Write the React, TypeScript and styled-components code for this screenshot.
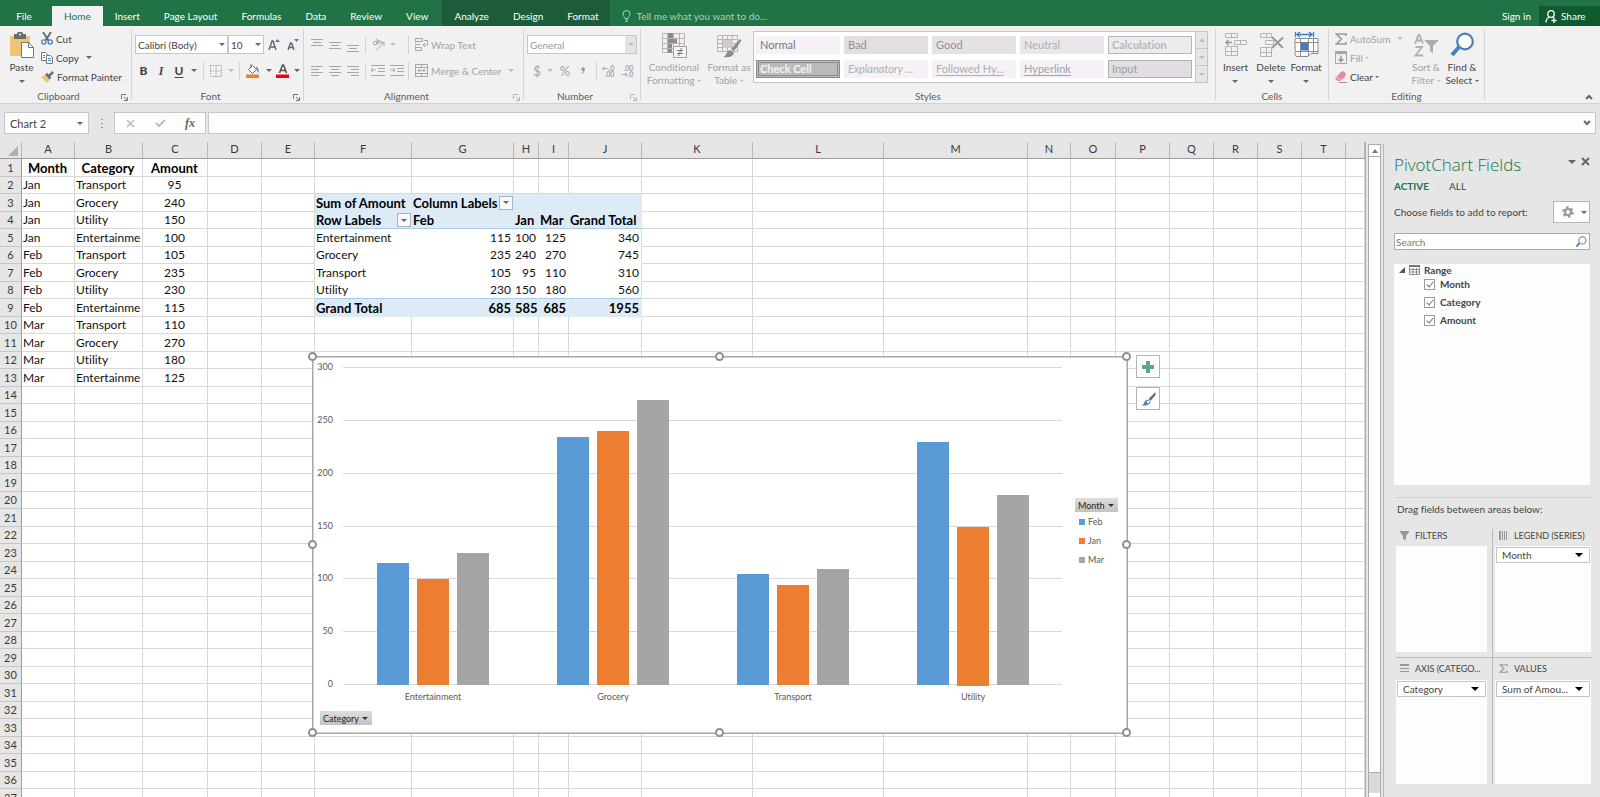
import React from 'react';
import styled, { createGlobalStyle, css } from 'styled-components';

const GlobalStyle = createGlobalStyle`
  *, *::before, *::after { box-sizing: border-box; }
  html, body { margin: 0; height: 100%; }
  body { font-family: Lato, 'Open Sans', sans-serif; font-size: 10px; font-variant-ligatures: none; color: #444; background: #e6e6e6; }
  button, select, input { font: inherit; font-variant-ligatures: none; color: inherit; margin: 0; padding: 0; border: 0; background: none; border-radius: 0; }
  svg { display: block; flex: none; }
`;

/* ---------- shell ---------- */

const Window = styled.div`
  display: flex;
  flex-direction: column;
  height: 100vh;
  overflow: hidden;
`;

const TabBar = styled.nav`
  display: flex;
  align-items: flex-end;
  height: 26px;
  flex: none;
  background: #217346;
  color: #fff;
`;

const Tab = styled.button<{ $active?: boolean }>`
  height: 20px;
  padding: 0 12px;
  white-space: nowrap;
  ${(p) => p.$active && css`background: #f1f1f1; color: #217346;`}
`;

const FileTab = styled(Tab)`
  width: 52px;
  padding: 0 4px 0 0;
  text-align: center;
`;

const ContextTabs = styled.div`
  display: flex;
  align-items: flex-end;
  align-self: stretch;
  margin-left: 2px;
  background: #1c5c39;
`;

const TellMe = styled.label`
  display: flex;
  align-items: center;
  gap: 5px;
  height: 20px;
  margin-left: 12px;
  flex: 1;
  input { width: 200px; outline: 0; }
  input::placeholder { color: #a9d0b9; opacity: 1; }
`;

const SignIn = styled.a`
  line-height: 20px;
  margin-right: 8px;
  color: #fff;
  text-decoration: none;
`;

const Share = styled.button`
  display: flex;
  align-items: center;
  gap: 4px;
  height: 20px;
  width: 61px;
  padding-left: 6px;
  background: #0f5a2e;
`;

/* ---------- ribbon ---------- */

const Ribbon = styled.div`
  display: flex;
  height: 78px;
  flex: none;
  background: #f1f1f1;
  border-bottom: 1px solid #d2d2d2;
`;

const Group = styled.section<{ $width: number }>`
  display: flex;
  flex-direction: column;
  width: ${(p) => p.$width}px;
  margin: 3px 0;
  border-right: 1px solid #d4d4d4;
`;

const GroupBody = styled.div`
  display: flex;
  align-items: flex-start;
  flex: 1;
`;

const GroupFooter = styled.div`
  display: flex;
  align-items: center;
  height: 14px;
  margin-bottom: -3px;
  color: #5c5c5c;
`;

const GroupName = styled.span`
  flex: 1;
  text-align: center;
`;

const Launcher = styled.button<{ $dim?: boolean }>`
  width: 14px;
  height: 12px;
  padding: 3px 0 0 4px;
  color: ${(p) => (p.$dim ? '#b5b5b5' : '#777')};
`;

const Caret = styled.i<{ $color?: string; $size?: number }>`
  display: inline-block;
  flex: none;
  width: 0;
  height: 0;
  vertical-align: middle;
  border: ${(p) => p.$size ?? 3}px solid transparent;
  border-top-color: ${(p) => p.$color ?? '#666'};
  border-bottom-width: 0;
`;

const BigButton = styled.button<{ $width: number; $dim?: boolean }>`
  display: flex;
  flex-direction: column;
  align-items: center;
  gap: 3px;
  width: ${(p) => p.$width}px;
  padding-top: 3px;
  line-height: 13px;
  white-space: nowrap;
  color: ${(p) => (p.$dim ? '#a3a3a3' : '#444')};
  span { display: block; }
`;

const SmallRows = styled.div`
  display: flex;
  flex-direction: column;
`;

const SmallButton = styled.button<{ $dim?: boolean; $spread?: number }>`
  display: flex;
  align-items: center;
  gap: 3px;
  height: 19px;
  white-space: nowrap;
  color: ${(p) => (p.$dim ? '#a3a3a3' : '#444')};
  ${Caret} { margin-left: ${(p) => p.$spread ?? -1}px; }
`;

const ToolStack = styled.div<{ $pad?: number }>`
  display: flex;
  flex-direction: column;
  gap: 7px;
  padding: 6px 0 0 ${(p) => p.$pad ?? 0}px;
`;

const ToolRow = styled.div<{ $gap?: number }>`
  display: flex;
  align-items: center;
  gap: ${(p) => p.$gap ?? 0}px;
  height: 19px;
`;

const Tool = styled.button<{ $width?: number; $dim?: boolean }>`
  display: grid;
  place-items: center;
  width: ${(p) => p.$width ?? 18}px;
  height: 19px;
  color: ${(p) => (p.$dim ? '#a3a3a3' : '#444')};
`;

const Spacer = styled.span<{ $width: number }>`
  width: ${(p) => p.$width}px;
`;

const Glyph = styled.span<{ $kind?: 'bold' | 'italic' | 'underline' | 'number' | 'fx' }>`
  font-size: 12px;
  line-height: 14px;
  font-weight: ${(p) => (p.$kind === 'bold' ? 900 : p.$kind === 'number' ? 400 : 700)};
  ${(p) => p.$kind === 'italic' && css`font-family: 'Liberation Serif', serif; font-style: italic;`}
  ${(p) => p.$kind === 'fx' && css`font-family: 'Liberation Serif', serif; font-style: italic; color: #666;`}
  ${(p) => p.$kind === 'underline' && css`text-decoration: underline; text-underline-offset: 2px;`}
  ${(p) => p.$kind === 'number' && css`font-size: 13px;`}
`;

const Divider = styled.span<{ $height?: number }>`
  width: 1px;
  height: ${(p) => p.$height ?? 18}px;
  background: #d4d4d4;
`;

const Combo = styled.div<{ $width: number; $dim?: boolean }>`
  display: flex;
  align-items: center;
  width: ${(p) => p.$width}px;
  height: 19px;
  background: #fff;
  border: 1px solid #c6c6c6;
  color: ${(p) => (p.$dim ? '#9a9a9a' : '#444')};
  select { appearance: none; flex: 1; min-width: 0; padding-left: 2px; outline: 0; }
`;

const ComboArrow = styled.span<{ $shade?: boolean }>`
  display: grid;
  place-items: center;
  align-self: stretch;
  width: 11px;
  background: ${(p) => (p.$shade ? '#e3e3e3' : 'transparent')};
  pointer-events: none;
`;

const Gallery = styled.div`
  display: flex;
  height: 52px;
  margin: 2px 0 0 2px;
  border: 1px solid #c6c6c6;
  background: #fff;
`;

const GalleryGrid = styled.div`
  display: grid;
  grid-template-columns: repeat(5, 84px);
  grid-template-rows: 18px 18px;
  gap: 6px 4px;
  padding: 4px 3px 4px 2px;
`;

const Swatch = styled.button<{ $bg: string; $fg: string; $line?: string; $look?: 'bold' | 'italic' | 'link' | 'check' }>`
  padding: 0 3px;
  text-align: left;
  font-size: 11px;
  line-height: 16px;
  white-space: nowrap;
  background: ${(p) => p.$bg};
  color: ${(p) => p.$fg};
  border: 1px solid ${(p) => p.$line ?? p.$bg};
  ${(p) => p.$look === 'bold' && css`font-weight: 700;`}
  ${(p) => p.$look === 'italic' && css`font-style: italic;`}
  ${(p) => p.$look === 'link' && css`text-decoration: underline; text-underline-offset: 2px;`}
  ${(p) => p.$look === 'check' && css`font-weight: 700; border: 3px double #8d8a8d; padding: 0 1px; line-height: 12px;`}
`;

const GalleryScroll = styled.div`
  display: flex;
  flex-direction: column;
  width: 12px;
  border-left: 1px solid #c6c6c6;
  button { flex: 1; display: grid; place-items: center; background: #e6e6e6; color: #bdbdbd; }
  button + button { border-top: 1px solid #c6c6c6; }
`;

const Collapse = styled.button`
  margin: auto 7px 3px auto;
  color: #666;
`;

/* ---------- formula bar ---------- */

const FormulaRow = styled.div`
  display: flex;
  height: 38px;
  flex: none;
  padding: 8px 4px;
`;

const Field = styled.div<{ $width?: number; $ml?: number }>`
  display: flex;
  align-items: center;
  ${(p) => (p.$width ? css`width: ${p.$width}px;` : css`flex: 1;`)}
  margin-left: ${(p) => p.$ml ?? 0}px;
  background: #fdfdfd;
  border: 1px solid #c8c8c8;
  input { flex: 1; min-width: 0; padding-left: 5px; font-size: 11px; outline: 0; }
  > button { width: 30px; display: grid; place-items: center; }
`;

const Grip = styled.span`
  width: 25px;
  display: grid;
  place-items: center;
`;

const FieldArrow = styled.button`
  && { width: 17px; }
`;

/* ---------- sheet ---------- */

const Workspace = styled.main`
  display: flex;
  flex: 1;
  min-height: 0;
`;

const SheetArea = styled.div`
  position: relative;
  flex: 1;
  min-width: 0;
  overflow: hidden;
  border-right: 1px solid #ababab;
`;

const Sheet = styled.table`
  width: 100%;
  table-layout: fixed;
  border-collapse: separate;
  border-spacing: 0;
  font-size: 12px;
  color: #111;
`;

const HeadRow = styled.tr`
  height: 17px;
`;

const SheetRow = styled.tr<{ $tall: boolean }>`
  height: ${(p) => (p.$tall ? 18 : 17)}px;
`;

const Heading = styled.th`
  padding: 0;
  font-size: 11px;
  line-height: 14px;
  font-weight: 400;
  vertical-align: top;
  color: #3a3a3a;
  background: #e6e6e6;
  border-right: 1px solid #b8b8b8;
  border-bottom: 1px solid #9c9c9c;
`;

const RowHeading = styled(Heading)`
  line-height: 16px;
  vertical-align: middle;
  border-right-color: #9c9c9c;
  border-bottom-color: #c6c6c6;
`;

const Corner = styled(Heading)`
  svg { margin: 4px 3px 0 auto; }
`;

type Align = 'left' | 'center' | 'right';

const Cell = styled.td<{ $align?: Align; $strong?: boolean; $pivot?: boolean; $fill?: boolean; $rule?: boolean; $edge?: boolean }>`
  padding: 0 2px 0 1px;
  line-height: 16px;
  white-space: nowrap;
  overflow: hidden;
  text-align: ${(p) => p.$align ?? 'left'};
  background: #fff;
  border-right: 1px solid #d8d8d8;
  border-bottom: 1px solid #d8d8d8;
  ${(p) => p.$pivot && css`border-color: #fff;`}
  ${(p) => p.$fill && css`background: #ddebf7; border-color: #ddebf7;`}
  ${(p) => p.$edge && !p.$fill && css`border-right-color: #d8d8d8;`}
  ${(p) => p.$rule && css`border-bottom-color: #a9cbe8;`}
  ${(p) => p.$strong && css`font-weight: 700; font-size: 13px; color: #000;`}
`;

const WithFilter = styled.div`
  display: flex;
  align-items: center;
  justify-content: space-between;
  height: 16px;
  margin-right: -2px;
`;

const FilterButton = styled.button`
  display: grid;
  place-items: center;
  width: 14px;
  height: 14px;
  background: #f7f9fc;
  border: 1px solid #a9b2bd;
`;

/* ---------- chart ---------- */

const ChartObject = styled.section`
  position: absolute;
  left: 312px;
  top: 214px;
  width: 816px;
  height: 378px;
  display: flex;
  background: #fff;
  border: 1px solid #a6a6a6;
  outline: 1px solid #d4d4d4;
  outline-offset: -2px;
`;

const Handle = styled.i<{ $x: number; $y: number }>`
  position: absolute;
  left: ${(p) => p.$x}%;
  top: ${(p) => p.$y}%;
  width: 9px;
  height: 9px;
  margin: -5px;
  background: #fff;
  border: 2px solid #8f8f8f;
  border-radius: 50%;
`;

const PlotColumn = styled.div`
  display: flex;
  flex-direction: column;
  gap: 6px;
  width: 762px;
`;

const Plot = styled.svg`
  font-size: 9px;
  fill: #595959;
`;

const ChartFieldButton = styled.button`
  display: flex;
  align-items: center;
  align-self: flex-start;
  gap: 3px;
  height: 14px;
  padding: 0 4px 0 3px;
  font-size: 9px;
  color: #222;
  background: linear-gradient(#dedede, #c2c2c2);
`;

const CategoryButton = styled(ChartFieldButton)`
  margin-left: 7px;
`;

const Legend = styled.ul`
  margin: 141px 0 0;
  padding: 0;
  list-style: none;
  font-size: 9px;
  color: #595959;
`;

const LegendItem = styled.li<{ $color: string }>`
  display: flex;
  align-items: center;
  gap: 3px;
  height: 19px;
  padding-left: 4px;
  &::before { content: ''; width: 6px; height: 6px; background: ${(p) => p.$color}; }
`;

const ChartTools = styled.div`
  position: absolute;
  left: 1136px;
  top: 213px;
  display: grid;
  gap: 9px;
  button { display: grid; place-items: center; width: 24px; height: 23px; background: #fff; border: 1px solid #b4b4b4; }
`;

/* ---------- scroll bar ---------- */

const ScrollBar = styled.div`
  display: flex;
  flex-direction: column;
  width: 13px;
  margin: 2px 2px 0 2px;
  background: #dadada;
  border: 1px solid #ababab;
  border-bottom: 0;
`;

const ScrollUp = styled.button`
  display: grid;
  place-items: center;
  height: 12px;
  background: #fff;
  border-bottom: 1px solid #ababab;
`;

const ScrollThumb = styled.div`
  flex: 1;
  margin-bottom: 20px;
  background: #fdfdfd;
  border-bottom: 1px solid #ababab;
`;

const ScrollDown = styled.button`
  height: 4px;
  background: #fff;
`;

/* ---------- field pane ---------- */

const Pane = styled.aside`
  display: flex;
  flex-direction: column;
  width: 217px;
  margin-top: 2px;
  padding: 0 10px 13px;
  border-left: 1px solid #b8b8b8;
`;

const PaneHead = styled.header`
  display: flex;
  align-items: flex-start;
  padding-top: 9px;
  h2 { flex: 1; margin: 0; font: 300 17px/23px 'Open Sans', sans-serif; color: #217346; }
  button { height: 17px; display: grid; place-items: center; margin-left: 5px; }
`;

const PaneTabs = styled.div`
  display: flex;
  align-items: center;
  height: 20px;
  button { padding-right: 9px; }
  button:first-child { font-weight: 700; color: #217346; }
  button + button { border-left: 1px solid #dcdcdc; padding-left: 10px; }
`;

const PaneLine = styled.div`
  display: flex;
  align-items: center;
  justify-content: space-between;
  height: 24px;
  margin-top: 4px;
`;

const GearButton = styled.button`
  display: flex;
  align-items: center;
  gap: 7px;
  width: 37px;
  height: 22px;
  padding-left: 8px;
  background: #fff;
  border: 1px solid #b4b4b4;
`;

const SearchBox = styled.label`
  display: flex;
  align-items: center;
  height: 17px;
  margin-top: 9px;
  padding: 0 2px 0 1px;
  background: #fff;
  border: 1px solid #ababab;
  input { flex: 1; min-width: 0; outline: 0; }
  input::placeholder { color: #777; opacity: 1; }
`;

const FieldList = styled.div`
  flex: 221 1 0;
  min-height: 0;
  margin-top: 14px;
  background: #fdfdfd;
  font-weight: 700;
`;

const RangeNode = styled.div`
  display: flex;
  align-items: center;
  gap: 4px;
  height: 12px;
  padding-left: 5px;
  margin-bottom: -1px;
`;

const FieldCheck = styled.label`
  display: flex;
  align-items: center;
  gap: 5px;
  height: 18px;
  padding-left: 30px;
  input {
    appearance: none;
    display: grid;
    place-items: center;
    width: 11px;
    height: 11px;
    border: 1px solid #9c9c9c;
    background: #fff;
  }
  input:checked::after {
    content: '';
    width: 4px;
    height: 7px;
    margin-top: -2px;
    border: solid #777;
    border-width: 0 1px 1px 0;
    transform: rotate(40deg);
  }
`;

const DragHint = styled.p`
  margin: 12px -2px 0 1px;
  padding: 4px 0 0 2px;
  line-height: 14px;
  border-top: 1px dotted #c0c0c0;
`;

const Areas = styled.div`
  display: grid;
  grid-template-columns: 96px 1fr;
  grid-template-rows: 1fr 1fr;
  flex: 254 1 0;
  min-height: 0;
  margin: 13px -1px 0 2px;
`;

const Area = styled.section<{ $right?: boolean; $bottom?: boolean }>`
  display: flex;
  flex-direction: column;
  min-width: 0;
  ${(p) => (p.$right ? css`padding-left: 2px; border-left: 1px solid #bcbcbc;` : css`padding-right: 5px;`)}
  ${(p) => (p.$bottom ? css`border-top: 1px solid #bcbcbc;` : css`padding-bottom: 5px;`)}
  h3 {
    display: flex;
    align-items: center;
    gap: 6px;
    height: ${(p) => (p.$bottom ? 22 : 17)}px;
    margin: 0 0 0 4px;
    padding-bottom: ${(p) => (p.$bottom ? 1 : 4)}px;
    font-size: 9px;
    font-weight: 400;
    white-space: nowrap;
  }
`;

const DropZone = styled.div`
  flex: 1;
  padding: 1px;
  background: #fdfdfd;
`;

const AreaField = styled(Combo)`
  width: 100%;
  height: 16px;
  select { padding-left: 5px; text-overflow: ellipsis; }
  ${ComboArrow} { width: 20px; }
`;

/* ---------- icons ---------- */

const G = '#a9a5a9';

const LaunchIcon = () => (
  <svg width="7" height="7" viewBox="0 0 7 7" fill="none" stroke="currentColor"><path d="M.5 5V.5H5M3 3l3 3M6.5 3v3.500H3" /></svg>
);
const PasteIcon = () => (
  <svg width="25" height="26" viewBox="0 0 25 26">
    <path d="M1 4h20v20H1z" fill="#eec475" /><path d="M5 2h3a3 2.500 0 0 1 6 0h3v5H5z" fill="#6d6d6d" /><circle cx="11" cy="2.500" r="1" fill="#f1f1f1" />
    <path d="M12.500 10.500h7l5 5v10h-12z" fill="#fff" stroke="#777" /><path d="M19.500 10.500v5h5" fill="none" stroke="#777" />
  </svg>
);
const CutIcon = () => (
  <svg width="12" height="13" viewBox="0 0 12 13" fill="none">
    <path d="M2 0l5.500 8.500M10 0L4.500 8.500" stroke="#666" strokeWidth="1.800" /><circle cx="2.800" cy="10" r="2.100" stroke="#4a7ebb" strokeWidth="1.300" /><circle cx="9.200" cy="10" r="2.100" stroke="#4a7ebb" strokeWidth="1.300" />
  </svg>
);
const CopyIcon = () => (
  <svg width="12" height="12" viewBox="0 0 12 12" fill="#fff" stroke="#777">
    <path d="M.5.5h4l2 2v6h-6z" /><path d="M5.500 3.500h4l2 2v6h-6z" /><path d="M2 3.500h2M2 5.500h2M7 6.500h3M7 8.500h3" stroke="#4a7ebb" />
  </svg>
);
const PainterIcon = () => (
  <svg width="13" height="12" viewBox="0 0 13 12"><path d="M0 6l4-2 5 5-3 3z" fill="#eec475" /><path d="M4 3.500L6 2l2 1.500L11 0l2 2-3.500 3L10 7 8.500 8.500z" fill="#6d6d6d" /></svg>
);
const GrowIcon = ({ down }: { down?: boolean }) => (
  <svg width="13" height="14" viewBox="0 0 13 14">
    <path d={down ? 'M1 12l2.500-7h1L7 12M2.300 9.500h3.400' : 'M1 12l3-9h1l3 9M2.300 9h4.400'} fill="none" stroke="#666" strokeWidth="1.400" />
    <path d={down ? 'M7 1h5L9.500 4z' : 'M7 4h5L9.500 1z'} fill="#4a7ebb" />
  </svg>
);
const BordersIcon = () => (
  <svg width="12" height="12" viewBox="0 0 12 12" fill="none" stroke={G} strokeDasharray="1.500 1"><path d="M.5.5h11v11H.5zM6 0v12M0 6h12" /></svg>
);
const FillIcon = () => (
  <svg width="14" height="14" viewBox="0 0 14 14">
    <path d="M2.500 5.500L6.500 1.500l4 4-4 4z" fill="#fff" stroke="#666" /><path d="M5 4V0" stroke="#666" /><path d="M10 3c2 0 3 3 2.500 6C11 8 11.500 5 10 4z" fill="#4a7ebb" /><path d="M0 10.500h13V14H0z" fill="#ed7d31" />
  </svg>
);
const FontColorIcon = () => (
  <svg width="14" height="14" viewBox="0 0 14 14"><path d="M3.500 9L6.500 1h1l3 8M4.500 6.500h5" fill="none" stroke="#555" strokeWidth="1.600" /><path d="M0 10.500h13V14H0z" fill="#f00" /></svg>
);
const LinesIcon = ({ spans, top = 0 }: { spans: [number, number][]; top?: number }) => (
  <svg width="12" height="14" viewBox="0 0 12 14" stroke={G}>
    {spans.map(([a, b], i) => <path key={i} d={`M${a} ${top + 0.5 + i * 3}H${b}`} />)}
  </svg>
);
const OrientIcon = () => (
  <svg width="13" height="13" viewBox="0 0 13 13" fill="none" stroke={G}>
    <path d="M4 12.500L12 4.500M12 8V4.500H8.500" /><circle cx="3" cy="5" r="1.800" /><path d="M5.500 6.500L4 3" /><circle cx="7.500" cy="4" r="1.500" /><path d="M6.500 5L4.500.5" />
  </svg>
);
const IndentIcon = ({ flip }: { flip?: boolean }) => (
  <svg width="14" height="12" viewBox="0 0 14 12" fill="none" stroke={G}>
    <path d="M0 .5h14M7 3.500h7M7 6.500h7M0 10.500h14" /><path d={flip ? 'M0 5h5M3 3l2 2-2 2' : 'M5 5H0M2 3L0 5l2 2'} />
  </svg>
);
const WrapIcon = () => (
  <svg width="13" height="13" viewBox="0 0 13 13" fill="none" stroke={G}>
    <path d="M.5.5h7v3h-7zM.5 6.500h5M.5 12.500h6v-3h-6zM0 .5v12" /><path d="M9 2.500h3.500V7H8M10 5L8 7l2 2" />
  </svg>
);
const MergeIcon = () => (
  <svg width="13" height="13" viewBox="0 0 13 13" fill="none" stroke={G}>
    <path d="M.5.5h12v12H.5zM.5 3.500h12M.5 9.500h12M6.500 0v3.500M6.500 9.500V13" /><path d="M3 6.500h7M4.500 5L3 6.500 4.500 8M8.500 5L10 6.500 8.500 8" />
  </svg>
);
const CommaIcon = () => (
  <svg width="4" height="7" viewBox="0 0 4 7" fill="#999"><circle cx="2" cy="2" r="1.800" /><path d="M3.800 2c0 2-1 4-3 4.800L.5 6C1.700 5.300 2.200 4.300 2 3z" /></svg>
);
const DecimalText = styled.span`
  display: grid;
  font-size: 7px;
  line-height: 6px;
  font-weight: 700;
  text-align: right;
`;
const CondIcon = () => (
  <svg width="26" height="26" viewBox="0 0 26 26">
    <path d="M1.500 1.500h22v19h-22zM6.500 1v20M12.500 1v20M18.500 1v20M1 6.500h23M1 11.500h23M1 16.500h23" fill="#f3eef4" stroke="#b9b4b9" />
    <path d="M7 1h5v5H7zM7 7h9v4H7zM7 12h4v4H7zM7 17h4v4H7z" fill="#8e8a8e" />
    <path d="M12.500 14.500h13v11h-13z" fill="#f6f2f6" stroke="#a29da2" /><path d="M16 18.500h6M16 21.500h6M20.500 16l-3 8" stroke="#777" />
  </svg>
);
const TableBrushIcon = () => (
  <svg width="26" height="26" viewBox="0 0 26 26">
    <path d="M1.500 3.500h20v16h-20zM6.500 3v17M11.500 3v17M16.500 3v17M1 7.500h21M1 11.500h21M1 15.500h21" fill="#f3eef4" stroke="#b9b4b9" />
    <path d="M7 8h10v8H7z" fill="#cfcacf" /><path d="M24 7l1.500 1.500L18 19l-3-2z" fill="#8e8a8e" /><path d="M14 18l4 3c-1 4-6 5-11 4 4-1 3-6 7-7z" fill="#8e8a8e" />
  </svg>
);
const InsertIcon = () => (
  <svg width="24" height="26" viewBox="0 0 24 26" fill="#f6f0f6" stroke="#b9b1b9">
    <path d="M1.500 1.500h12v4h-12zM7.500 1v5M1.500 14.500h12v9h-12zM7.500 14v10M1 19.500h13M10.500 8.500h12v4h-12zM16.500 8v5" /><path d="M8 10.500H2M4.500 8L2 10.500 4.500 13" fill="none" stroke="#999" strokeWidth="1.500" />
  </svg>
);
const DeleteIcon = () => (
  <svg width="26" height="26" viewBox="0 0 26 26" fill="#f6f0f6" stroke="#b9b1b9">
    <path d="M2.500 1.500h11v4h-11zM8.500 1v5M2.500 15.500h11v9h-11zM8.500 15v10M2 20.500h12M7.500 8.500h8v4h-8z" /><path d="M14 5l11 11M25 5.500L14 16" fill="none" stroke="#999" strokeWidth="2" />
  </svg>
);
const FormatIcon = () => (
  <svg width="26" height="26" viewBox="0 0 26 26" fill="none">
    <path d="M2.500 0v5M20.500 0v5M4 2.500h15M7 0L4 2.500 7 5M16 0l3 2.500L16 5" stroke="#3f7fbf" strokeWidth="1.300" />
    <path d="M2 6.500h23v15h-7l-3 3H3c-2-3 0-5-1-8zM7.500 6v18M15.500 6v18M20.500 6v15M2 10.500h23M2 19.500h23" fill="#fff" stroke="#8b8b8b" /><path d="M8 10.500h7v8H8z" fill="#3f7fbf" />
  </svg>
);
const SigmaIcon = ({ size = 12 }: { size?: number }) => (
  <svg width={size} height={size} viewBox="0 0 12 12" fill="none" stroke="#999" strokeWidth="1.600"><path d="M11 3V1H1.500L6.500 6l-5 5H11V9" /></svg>
);
const FillDownIcon = () => (
  <svg width="12" height="13" viewBox="0 0 12 13" fill="none"><path d="M.5 1.500h11v11H.5z" stroke={G} /><path d="M0 0h12v3H0z" fill={G} /><path d="M6 4.500v6M3.500 8L6 10.500 8.500 8" stroke="#999" strokeWidth="1.500" /></svg>
);
const EraserIcon = () => (
  <svg width="12" height="12" viewBox="0 0 12 12"><path d="M6 1l2-1 3 2.500-1 3L5.500 10H3L0 7.500z" fill="#e58a9a" /><path d="M1.500 5.500l4.500 4" stroke="#f6d5db" /><path d="M4 11.500h8" stroke="#999" /></svg>
);
const SortIcon = () => (
  <svg width="26" height="26" viewBox="0 0 26 26" fill="none" stroke="#b0b0b0" strokeWidth="1.800">
    <path d="M2 11.500L5.500 3h1L10 11.500M3 8.500h6M2.500 15h6.500L2.500 23.500H10" /><path d="M11 8h15l-6 6v7l-3-2v-5z" fill="#adadad" stroke="none" />
  </svg>
);
const FindIcon = ({ size = 26 }: { size?: number }) => (
  <svg width={size} height={size} viewBox="0 0 26 26" fill="none" stroke="#4a80bd"><path d="M10.500 14.500L3 23" strokeWidth="4" /><circle cx="16" cy="9.500" r="7.800" fill="#fff" strokeWidth="2.200" /></svg>
);
const Chevron = ({ up }: { up?: boolean }) => (
  <svg width="8" height="6" viewBox="0 0 8 6" fill="none" stroke="#666" strokeWidth="2"><path d={up ? 'M1 5l3-3 3 3' : 'M1 1l3 3 3-3'} /></svg>
);
const UpArrow = ({ color = '#777' }: { color?: string }) => (
  <svg width="6" height="4" viewBox="0 0 6 4" fill={color}><path d="M0 4h6L3 0z" /></svg>
);
const GearIcon = () => (
  <svg width="12" height="12" viewBox="0 0 12 12" fill="none" stroke="#999"><circle cx="6" cy="6" r="3" strokeWidth="2.200" /><circle cx="6" cy="6" r="4.800" strokeWidth="2" strokeDasharray="2.500 2.530" /></svg>
);
const TableIcon = () => (
  <svg width="11" height="10" viewBox="0 0 11 10" fill="#fff" stroke="#777"><path d="M.5.5h10v9H.5zM.5 4.500h10M.5 7h10M4 3v7M7.500 3v7" strokeWidth=".8" /><path d="M0 1h11" strokeWidth="2" /></svg>
);

/* ---------- data ---------- */

const COLUMNS: [string, number?][] = [
  ['A', 53], ['B', 68], ['C', 65], ['D', 54], ['E', 53], ['F', 97], ['G', 102], ['H', 25], ['I', 30], ['J', 73], ['K', 111],
  ['L', 131], ['M', 144], ['N', 43], ['O', 45], ['P', 54], ['Q', 44], ['R', 44], ['S', 44], ['T', 44], [''],
];

const SOURCE: [string, string, string][] = [
  ['Month', 'Category', 'Amount'],
  ['Jan', 'Transport', '95'], ['Jan', 'Grocery', '240'], ['Jan', 'Utility', '150'], ['Jan', 'Entertainme', '100'],
  ['Feb', 'Transport', '105'], ['Feb', 'Grocery', '235'], ['Feb', 'Utility', '230'], ['Feb', 'Entertainme', '115'],
  ['Mar', 'Transport', '110'], ['Mar', 'Grocery', '270'], ['Mar', 'Utility', '180'], ['Mar', 'Entertainme', '125'],
];

const PIVOT: string[][] = [
  ['Sum of Amount', 'Column Labels', '', '', ''],
  ['Row Labels', 'Feb', 'Jan', 'Mar', 'Grand Total'],
  ['Entertainment', '115', '100', '125', '340'],
  ['Grocery', '235', '240', '270', '745'],
  ['Transport', '105', '95', '110', '310'],
  ['Utility', '230', '150', '180', '560'],
  ['Grand Total', '685', '585', '685', '1955'],
];

const SERIES = [
  { name: 'Feb', color: '#5b9bd5', values: [115, 235, 105, 230] },
  { name: 'Jan', color: '#ed7d31', values: [100, 240, 95, 150] },
  { name: 'Mar', color: '#a5a5a5', values: [125, 270, 110, 180] },
];
const CATEGORIES = ['Entertainment', 'Grocery', 'Transport', 'Utility'];

const STYLES: { name: string; bg: string; fg: string; line?: string; look?: 'bold' | 'italic' | 'link' | 'check' }[] = [
  { name: 'Normal', bg: '#f6f1f7', fg: '#777' },
  { name: 'Bad', bg: '#e2dee2', fg: '#929292' },
  { name: 'Good', bg: '#e5e1e5', fg: '#929292' },
  { name: 'Neutral', bg: '#ebe6ec', fg: '#b0aeb0' },
  { name: 'Calculation', bg: '#eeeaef', fg: '#bbb8bb', line: '#b9b6b9', look: 'bold' },
  { name: 'Check Cell', bg: '#bdbabd', fg: '#f5f2f5', look: 'check' },
  { name: 'Explanatory ...', bg: '#f6f1f7', fg: '#b0aeb0', look: 'italic' },
  { name: 'Followed Hy...', bg: '#f6f1f7', fg: '#b0aeb0', look: 'link' },
  { name: 'Hyperlink', bg: '#f6f1f7', fg: '#a3a1a3', look: 'link' },
  { name: 'Input', bg: '#e2dde2', fg: '#9f9d9f', line: '#b3b0b3' },
];

/* ---------- parts ---------- */

const PALE = '#bdbdbd';

function RibbonGroup({ name, width, launch, children }: { name: string; width: number; launch?: 'on' | 'dim'; children: React.ReactNode }) {
  return (
    <Group $width={width} aria-label={name}>
      <GroupBody>{children}</GroupBody>
      <GroupFooter>
        <GroupName>{name}</GroupName>
        {launch && <Launcher $dim={launch === 'dim'} aria-label={`${name} settings`}><LaunchIcon /></Launcher>}
      </GroupFooter>
    </Group>
  );
}

function Picker({ label, value, width, dim }: { label: string; value: string; width: number; dim?: boolean }) {
  return (
    <Combo $width={width} $dim={dim}>
      <select aria-label={label} defaultValue={value}><option>{value}</option></select>
      <ComboArrow $shade={dim}><Caret $color={dim ? PALE : undefined} /></ComboArrow>
    </Combo>
  );
}

const ClipboardBody = styled(GroupBody)`
  gap: 3px;
  padding-left: 5px;
`;

const EditRows = styled(SmallRows)`
  padding-left: 6px;
  width: 80px;
`;

function RibbonBar() {
  return (
    <Ribbon>
      <RibbonGroup name="Clipboard" width={132} launch="on">
        <ClipboardBody>
          <BigButton $width={33}><PasteIcon /><div><span>Paste</span><Caret /></div></BigButton>
          <SmallRows>
            <SmallButton><CutIcon />Cut</SmallButton>
            <SmallButton $spread={4}><CopyIcon />Copy<Caret /></SmallButton>
            <SmallButton><PainterIcon />Format Painter</SmallButton>
          </SmallRows>
        </ClipboardBody>
      </RibbonGroup>

      <RibbonGroup name="Font" width={172} launch="on">
        <ToolStack $pad={3}>
          <ToolRow>
            <Picker label="Font" value="Calibri (Body)" width={93} />
            <Picker label="Font size" value="10" width={36} />
            <Tool $width={20} aria-label="Increase font size"><GrowIcon /></Tool>
            <Tool aria-label="Decrease font size"><GrowIcon down /></Tool>
          </ToolRow>
          <ToolRow>
            <Tool $width={17} aria-label="Bold"><Glyph $kind="bold">B</Glyph></Tool>
            <Tool aria-label="Italic"><Glyph $kind="italic">I</Glyph></Tool>
            <Tool aria-label="Underline"><Glyph $kind="underline">U</Glyph></Tool>
            <Tool $width={12} aria-label="Underline style"><Caret /></Tool>
            <Spacer $width={3} /><Divider />
            <Tool $width={24} aria-label="Borders"><BordersIcon /></Tool>
            <Caret $color={PALE} />
            <Spacer $width={5} /><Divider />
            <Tool $width={26} aria-label="Fill color"><FillIcon /></Tool>
            <Caret />
            <Tool $width={22} aria-label="Font color"><FontColorIcon /></Tool>
            <Caret />
          </ToolRow>
        </ToolStack>
      </RibbonGroup>

      <RibbonGroup name="Alignment" width={220} launch="dim">
        <ToolStack $pad={4}>
          <ToolRow>
            <Tool aria-label="Top align"><LinesIcon spans={[[0, 12], [2, 10], [0, 12]]} top={1} /></Tool>
            <Tool aria-label="Middle align"><LinesIcon spans={[[0, 12], [2, 10], [0, 12]]} top={4} /></Tool>
            <Tool aria-label="Bottom align"><LinesIcon spans={[[0, 12], [2, 10], [0, 12]]} top={7} /></Tool>
            <Spacer $width={3} /><Divider $height={16} />
            <Tool $width={24} aria-label="Orientation"><OrientIcon /></Tool>
            <Caret $color={PALE} />
          </ToolRow>
          <ToolRow>
            <Tool aria-label="Align left"><LinesIcon spans={[[0, 12], [0, 8], [0, 12], [0, 8]]} top={2} /></Tool>
            <Tool aria-label="Center"><LinesIcon spans={[[0, 12], [2, 10], [0, 12], [2, 10]]} top={2} /></Tool>
            <Tool aria-label="Align right"><LinesIcon spans={[[0, 12], [4, 12], [0, 12], [4, 12]]} top={2} /></Tool>
            <Spacer $width={3} /><Divider $height={16} />
            <Tool $width={24} aria-label="Decrease indent"><IndentIcon /></Tool>
            <Tool $width={14} aria-label="Increase indent"><IndentIcon flip /></Tool>
          </ToolRow>
        </ToolStack>
        <ToolStack $pad={4}>
          <ToolRow $gap={6}><Divider /><SmallButton $dim><WrapIcon />Wrap Text</SmallButton></ToolRow>
          <ToolRow $gap={6}><Divider /><SmallButton $dim $spread={4}><MergeIcon />Merge &amp; Center<Caret $color={PALE} /></SmallButton></ToolRow>
        </ToolStack>
      </RibbonGroup>

      <RibbonGroup name="Number" width={117} launch="dim">
        <ToolStack $pad={3}>
          <Picker label="Number format" value="General" width={110} dim />
          <ToolRow>
            <Tool $width={20} $dim aria-label="Currency"><Glyph $kind="number">$</Glyph></Tool>
            <Caret $color={PALE} />
            <Tool $width={24} $dim aria-label="Percent"><Glyph $kind="number">%</Glyph></Tool>
            <Tool $width={12} $dim aria-label="Comma"><CommaIcon /></Tool>
            <Spacer $width={7} /><Divider />
            <Tool $width={22} $dim aria-label="Increase decimal"><DecimalText><span>←.0</span><span>.00</span></DecimalText></Tool>
            <Tool $width={16} $dim aria-label="Decrease decimal"><DecimalText><span>.00</span><span>→.0</span></DecimalText></Tool>
          </ToolRow>
        </ToolStack>
      </RibbonGroup>

      <RibbonGroup name="Styles" width={575}>
        <BigButton $width={66} $dim><CondIcon /><div><span>Conditional</span>Formatting <Caret $color={PALE} $size={2} /></div></BigButton>
        <BigButton $width={44} $dim><TableBrushIcon /><div><span>Format as</span>Table <Caret $color={PALE} $size={2} /></div></BigButton>
        <Gallery>
          <GalleryGrid>
            {STYLES.map((s) => <Swatch key={s.name} $bg={s.bg} $fg={s.fg} $line={s.line} $look={s.look}>{s.name}</Swatch>)}
          </GalleryGrid>
          <GalleryScroll>
            <button aria-label="Previous styles"><UpArrow color={PALE} /></button>
            <button aria-label="Next styles"><Caret $color={PALE} /></button>
            <button aria-label="More styles"><Caret $color={PALE} /></button>
          </GalleryScroll>
        </Gallery>
      </RibbonGroup>

      <RibbonGroup name="Cells" width={113}>
        <BigButton $width={39}><InsertIcon /><div><span>Insert</span><Caret /></div></BigButton>
        <BigButton $width={32}><DeleteIcon /><div><span>Delete</span><Caret /></div></BigButton>
        <BigButton $width={38}><FormatIcon /><div><span>Format</span><Caret /></div></BigButton>
      </RibbonGroup>

      <RibbonGroup name="Editing" width={156}>
        <EditRows>
          <SmallButton $dim $spread={4}><SigmaIcon />AutoSum<Caret $color={PALE} /></SmallButton>
          <SmallButton $dim><FillDownIcon />Fill<Caret $color={PALE} $size={2} /></SmallButton>
          <SmallButton><EraserIcon />Clear<Caret $size={2} /></SmallButton>
        </EditRows>
        <BigButton $width={34} $dim><SortIcon /><div><span>Sort &amp;</span>Filter <Caret $color={PALE} $size={2} /></div></BigButton>
        <BigButton $width={38}><FindIcon /><div><span>Find &amp;</span>Select <Caret $size={2} /></div></BigButton>
      </RibbonGroup>
      <Collapse aria-label="Collapse the ribbon"><Chevron up /></Collapse>
    </Ribbon>
  );
}

function PivotCell({ row, col }: { row: number; col: number }) {
  const text = PIVOT[row][col];
  const total = row === 6;
  const header = row < 2;
  const numeric = col > 0 && !header;
  const filter = (row === 0 && col === 1) || (row === 1 && col === 0);
  return (
    <Cell $pivot $fill={header || total} $strong={header || total} $rule={row === 1 || row === 5} $edge={col === 4} $align={numeric ? 'right' : 'left'}>
      {filter ? <WithFilter>{text}<FilterButton aria-label={`Filter ${text}`}><Caret /></FilterButton></WithFilter> : text}
    </Cell>
  );
}

function SheetCell({ row, col }: { row: number; col: number }) {
  if (row >= 3 && row <= 9 && col >= 5 && col <= 9) return <PivotCell row={row - 3} col={col - 5} />;
  const text = col < 3 ? SOURCE[row - 1]?.[col] : undefined;
  const head = row === 1;
  return <Cell $strong={head && !!text} $align={text && (head || col === 2) ? 'center' : 'left'}>{text}</Cell>;
}

function Grid() {
  return (
    <Sheet>
      <colgroup><col width={22} />{COLUMNS.map(([n, w]) => <col key={n} width={w} />)}</colgroup>
      <thead>
        <HeadRow>
          <Corner aria-label="Select all"><svg width="10" height="10"><path d="M10 0v10H0z" fill="#b0b0b0" /></svg></Corner>
          {COLUMNS.map(([n]) => <Heading key={n} scope="col">{n}</Heading>)}
        </HeadRow>
      </thead>
      <tbody>
        {Array.from({ length: 37 }, (_, i) => i + 1).map((r) => (
          <SheetRow key={r} $tall={r % 2 === 1}>
            <RowHeading scope="row">{r}</RowHeading>
            {COLUMNS.map(([n], c) => <SheetCell key={n} row={r} col={c} />)}
          </SheetRow>
        ))}
      </tbody>
    </Sheet>
  );
}

const BASE = 327;
const UNIT = 317 / 300;

function PivotChart() {
  return (
    <ChartObject aria-label="Pivot chart">
      <PlotColumn>
        <Plot width="750" height="348" viewBox="0 0 750 348">
          {[0, 50, 100, 150, 200, 250, 300].map((v) => {
            const y = Math.round(BASE - v * UNIT);
            return (
              <g key={v}>
                <path d={`M30 ${y + 0.5}H749`} stroke="#d9d9d9" />
                <text x="20" y={y + 3} textAnchor="end">{v}</text>
              </g>
            );
          })}
          {SERIES.map((s, j) => s.values.map((v, i) => (
            <rect key={`${s.name}${i}`} x={64 + i * 180 + j * 40} y={Math.round(BASE - v * UNIT) + 1} width="32" height={Math.round(v * UNIT)} fill={s.color} />
          )))}
          {CATEGORIES.map((c, i) => <text key={c} x={120 + i * 180} y="343" textAnchor="middle">{c}</text>)}
        </Plot>
        <CategoryButton>Category<Caret $color="#333" /></CategoryButton>
      </PlotColumn>
      <div>
        <Legend>
          <li><ChartFieldButton>Month<Caret $color="#333" /></ChartFieldButton></li>
          {SERIES.map((s) => <LegendItem key={s.name} $color={s.color}>{s.name}</LegendItem>)}
        </Legend>
      </div>
      {[[0, 0], [50, 0], [100, 0], [0, 50], [100, 50], [0, 100], [50, 100], [100, 100]].map(([x, y]) => <Handle key={`${x}-${y}`} $x={x} $y={y} />)}
    </ChartObject>
  );
}

function AreaBox({ title, icon, value, right, bottom }: { title: string; icon: React.ReactNode; value?: string; right?: boolean; bottom?: boolean }) {
  return (
    <Area $right={right} $bottom={bottom}>
      <h3>{icon}<span>{title}</span></h3>
      <DropZone>
        {value && (
          <AreaField $width={90}>
            <select aria-label={title} defaultValue={value}><option>{value}</option></select>
            <ComboArrow><Caret $color="#000" $size={4} /></ComboArrow>
          </AreaField>
        )}
      </DropZone>
    </Area>
  );
}

function FieldsPane() {
  return (
    <Pane>
      <PaneHead>
        <h2>PivotChart Fields</h2>
        <button aria-label="Pane options"><Caret $size={4} /></button>
        <button aria-label="Close pane"><svg width="9" height="9" viewBox="0 0 9 9" stroke="#666" strokeWidth="2"><path d="M1 1l7 7M8 1L1 8" /></svg></button>
      </PaneHead>
      <PaneTabs><button>ACTIVE</button><button>ALL</button></PaneTabs>
      <PaneLine>
        Choose fields to add to report:
        <GearButton aria-label="Tools"><GearIcon /><Caret /></GearButton>
      </PaneLine>
      <SearchBox><input placeholder="Search" aria-label="Search fields" /><FindIcon size={12} /></SearchBox>
      <FieldList>
        <RangeNode><svg width="6" height="6"><path d="M6 0v6H0z" fill="#555" /></svg><TableIcon />Range</RangeNode>
        {['Month', 'Category', 'Amount'].map((f) => <FieldCheck key={f}><input type="checkbox" defaultChecked />{f}</FieldCheck>)}
      </FieldList>
      <DragHint>Drag fields between areas below:</DragHint>
      <Areas>
        <AreaBox title="FILTERS" icon={<svg width="9" height="9" viewBox="0 0 9 9" fill="#999"><path d="M0 0h9v1L6 5v4L3 8V5L0 1z" /></svg>} />
        <AreaBox title="LEGEND (SERIES)" right value="Month" icon={<svg width="9" height="9" viewBox="0 0 9 9" fill="#999"><path d="M0 0h2v9H0zM3 0h1v9H3zM5 0h1v9H5zM7 0h1v9H7z" /></svg>} />
        <AreaBox title="AXIS (CATEGO..." bottom value="Category" icon={<svg width="9" height="9" viewBox="0 0 9 9" fill="#999"><path d="M0 0h9v2H0zM0 4h9v1H0zM0 7h9v1H0z" /></svg>} />
        <AreaBox title="VALUES" right bottom value="Sum of Amou..." icon={<SigmaIcon size={9} />} />
      </Areas>
    </Pane>
  );
}

export default function App() {
  return (
    <Window>
      <GlobalStyle />
      <TabBar>
        <FileTab>File</FileTab>
        <Tab $active>Home</Tab>
        {['Insert', 'Page Layout', 'Formulas', 'Data', 'Review', 'View'].map((t) => <Tab key={t}>{t}</Tab>)}
        <ContextTabs>{['Analyze', 'Design', 'Format'].map((t) => <Tab key={t}>{t}</Tab>)}</ContextTabs>
        <TellMe>
          <svg width="9" height="12" viewBox="0 0 9 12" fill="none" stroke="#a9d0b9"><path d="M3 8.500C3 7 1 6.500 1 4a3.500 3.500 0 0 1 7 0c0 2.500-2 3-2 4.500zM3 10h3M3.500 11.500h2" /></svg>
          <input placeholder="Tell me what you want to do..." aria-label="Tell me what you want to do" />
        </TellMe>
        <SignIn href="#signin">Sign in</SignIn>
        <Share>
          <svg width="12" height="13" viewBox="0 0 12 13" fill="none" stroke="#fff" strokeWidth="1.300"><circle cx="6" cy="4" r="3.300" /><path d="M1 12.500C1 10 2 8 4.500 7M8 7l1 1M9 8v5M6.500 10.500h5" /></svg>
          Share
        </Share>
      </TabBar>
      <RibbonBar />
      <FormulaRow>
        <Field $width={85}>
          <input defaultValue="Chart 2" aria-label="Name box" />
          <FieldArrow aria-label="Names"><Caret /></FieldArrow>
        </Field>
        <Grip><svg width="2" height="9" fill="#999"><path d="M0 0h2v1H0zM0 4h2v1H0zM0 8h2v1H0z" /></svg></Grip>
        <Field $width={92}>
          <button aria-label="Cancel"><svg width="9" height="9" viewBox="0 0 9 9" stroke="#bdbdbd" strokeWidth="1.500"><path d="M1 1l7 7M8 1L1 8" /></svg></button>
          <button aria-label="Enter"><svg width="11" height="8" viewBox="0 0 11 8" fill="none" stroke="#bdbdbd" strokeWidth="2"><path d="M1 4l3 3 6-6" /></svg></button>
          <button aria-label="Insert function"><Glyph $kind="fx">fx</Glyph></button>
        </Field>
        <Field $ml={2}>
          <input aria-label="Formula bar" />
          <FieldArrow aria-label="Expand formula bar"><Chevron /></FieldArrow>
        </Field>
      </FormulaRow>
      <Workspace>
        <SheetArea>
          <Grid />
          <PivotChart />
          <ChartTools>
            <button aria-label="Chart elements"><svg width="12" height="12" fill="#5fa58a"><path d="M4 0h4v4h4v4H8v4H4V8H0V4h4z" /></svg></button>
            <button aria-label="Chart styles"><svg width="15" height="14" viewBox="0 0 15 14"><path d="M14.500 0v3L9.500 9l-2-2z" fill="#6d6d6d" /><path d="M6.500 7.500l3 2.500c-1 3-5 4-9 3.500 3-1 2.500-5 6-6z" fill="#4a7ebb" /><circle cx="7" cy="10" r="1.300" fill="#fff" /></svg></button>
          </ChartTools>
        </SheetArea>
        <ScrollBar>
          <ScrollUp aria-label="Scroll up"><UpArrow /></ScrollUp>
          <ScrollThumb />
          <ScrollDown aria-label="Scroll down" />
        </ScrollBar>
        <FieldsPane />
      </Workspace>
    </Window>
  );
}
